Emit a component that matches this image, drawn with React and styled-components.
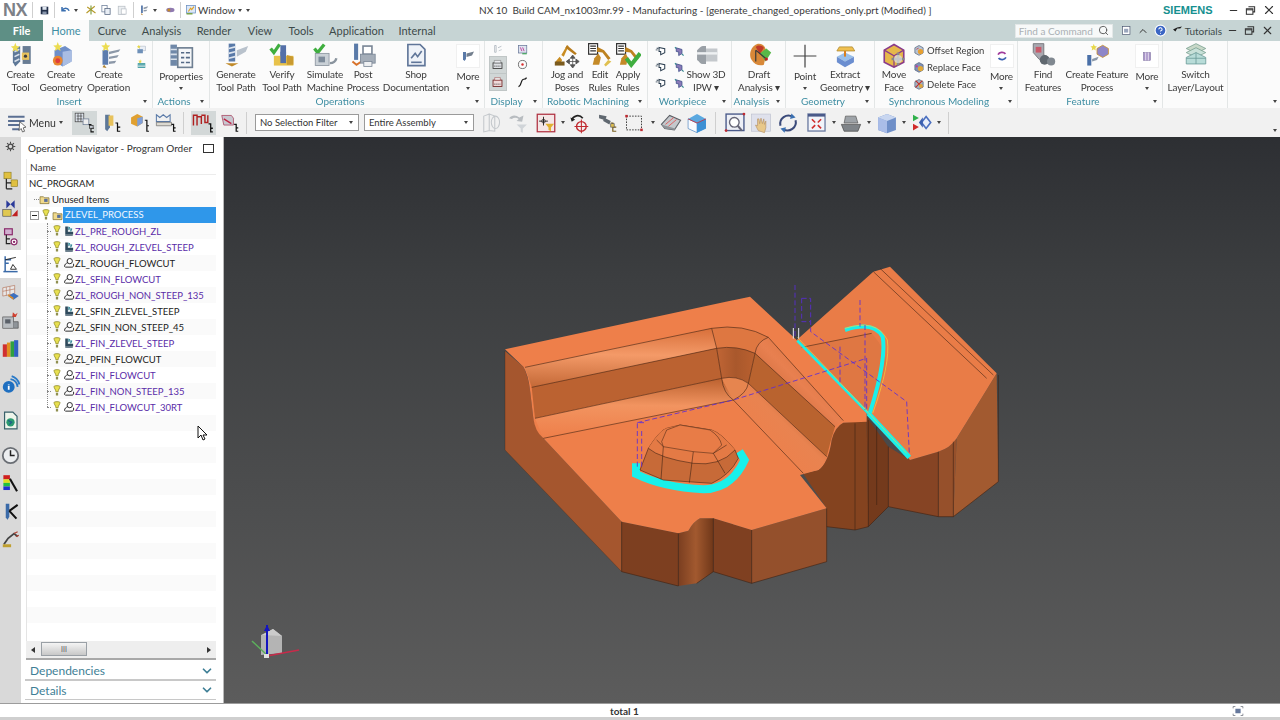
import React from "react";
import styled, { createGlobalStyle } from "styled-components";
import { ChevronDown, ChevronUp, Search, X, Minus, HelpCircle } from "lucide-react";

const GlobalStyle = createGlobalStyle`
  html, body { margin: 0; padding: 0; height: 100%; overflow: hidden; }
  body { font-family: Lato, "Liberation Sans", sans-serif; color: #333; background: #fff; }
  #root { height: 100%; }
`;

const TEAL = "#3f8ea3";
const PURPLE = "#5a2ca8";

const Svg = styled.svg`
  width: ${(p) => p.$s || 16}px;
  height: ${(p) => p.$s || 16}px;
  flex: none;
  display: block;
`;

const shapes = {
  save: <><rect x="5" y="5" width="22" height="22" fill="#23304a" /><rect x="10" y="5" width="12" height="9" fill="#dfe6f0" /><rect x="10" y="19" width="12" height="8" fill="#8795ab" /></>,
  undo: <path d="M8 8v10h10M8 18c5-9 15-9 19 0" fill="none" stroke="#3a6fb0" strokeWidth="4" />,
  scissors: <><path d="M4 24L26 6M6 8l22 16" stroke="#b79a2a" strokeWidth="3" /><path d="M16 4v24" stroke="#7a9a3a" strokeWidth="3" /></>,
  copy: <><rect x="5" y="4" width="14" height="17" fill="#fff" stroke="#6d7f9a" strokeWidth="2" /><rect x="13" y="12" width="14" height="16" fill="#e9eef5" stroke="#53647f" strokeWidth="2" /></>,
  paste: <><rect x="6" y="6" width="18" height="22" fill="#eceff2" stroke="#b8bec5" strokeWidth="2" /><rect x="14" y="13" width="13" height="14" fill="#fff" stroke="#b8bec5" strokeWidth="2" /></>,
  opMini: <><path d="M8 4h5v20H8z" fill="#5f7fae" /><path d="M10 24l3 6-5-2z" fill="#b07a2a" /><path d="M15 9l12-3-3 5-9 3zM15 16l10-1-3 4-7 1z" fill="#8f9aa8" /></>,
  eye: <><ellipse cx="17" cy="16" rx="11" ry="6" fill="#8f7ab0" /><circle cx="13" cy="16" r="4" fill="#c48a28" /></>,
  window: <><rect x="4" y="4" width="24" height="20" fill="#dce8f8" stroke="#6a8fc0" strokeWidth="2" /><path d="M9 20l6-9 3 4 6-8" stroke="#e2a020" strokeWidth="3" fill="none" /><rect x="4" y="24" width="16" height="4" fill="#7ba34a" /></>,
  createTool: <><path d="M6 10l9-5v19l-6 6-3-5z" fill="#5e7898" /><path d="M8 12l6-3M8 18l6-3M8 24l6-3" stroke="#d8e0ea" strokeWidth="2" /><rect x="18" y="5" width="10" height="22" fill="#687c94" /><rect x="17" y="13" width="9" height="9" fill="#e8c25c" /><circle cx="21.500" cy="17.500" r="2" fill="#3d3d3d" /><path d="M9 1l1.500 4 4 .4-3 2.600 1 4-3.500-2.200L5.500 12l1-4-3-2.600 4-.4z" fill="#ecdc50" /></>,
  createGeometry: <><path d="M8 10l13-5 8 5v14l-11 6-10-6z" fill="#6f8fc8" /><path d="M18 12l11-2v14l-11 6z" fill="#a9bde3" /><circle cx="12" cy="23" r="6" fill="#e8862e" /><circle cx="12" cy="23" r="3" fill="#e03c3c" /><path d="M12 0l1.500 4 4 .4-3 2.600 1 4L12 9 8.500 11l1-4-3-2.600 4-.4z" fill="#ecdc50" /></>,
  createOperation: <><rect x="8" y="10" width="7" height="18" fill="#5c7cae" /><path d="M10 28l3 4-5-1z" fill="#b0802c" /><path d="M16 12l14-3-2 3-12 3zM16 18l12-2-2 3-10 2zM16 24l9-1-2 3-7 1z" fill="#8c98a8" /><path d="M12 0l1.500 4 4 .4-3 2.600 1 4L12 9 8.500 11l1-4-3-2.600 4-.4z" fill="#ecdc50" /></>,
  smallA: <><rect x="10" y="6" width="18" height="14" fill="#eaeef4" stroke="#8593a8" /><rect x="4" y="15" width="16" height="12" fill="#6e90b8" /><path d="M8 2l1.500 4 4 .4-3 2.600 1 4L8 11l-3.500 2 1-4-3-2.600 4-.4z" fill="#e8d84a" /></>,
  smallB: <><rect x="5" y="12" width="22" height="14" fill="#3e9aa0" /><path d="M5 18h22M5 22h22" stroke="#e8f0f2" strokeWidth="2" /><path d="M12 1l1.500 4 4 .4-3 2.600 1 4L12 10l-3.500 2 1-4-3-2.600 4-.4z" fill="#e8d84a" /></>,
  properties: <><rect x="3" y="2" width="8" height="26" fill="#6f88a8" /><path d="M3 8h8M3 14h8M3 20h8" stroke="#d8e0ea" strokeWidth="2" /><rect x="12" y="6" width="18" height="24" fill="#f4f6f8" stroke="#6e7f92" strokeWidth="2" /><path d="M16 12h4M22 12h5M16 18h4M22 18h5M16 24h4M22 24h5" stroke="#546a86" strokeWidth="2" /></>,
  generate: <><rect x="7" y="2" width="8" height="22" fill="#5a7aa8" /><path d="M7 8l8-2M7 14l8-2M7 20l8-2" stroke="#dde4ee" strokeWidth="2" /><path d="M3 26h16l-8 4z" fill="#c08a2a" /><path d="M17 10l14-5-3 7-11 6z" fill="#b9c2cc" /></>,
  verify: <><path d="M2 8l4 5 7-10" stroke="#3fae3f" strokeWidth="4" fill="none" /><rect x="14" y="4" width="7" height="22" fill="#5470a8" /><rect x="6" y="17" width="24" height="12" fill="#e8c24a" /><rect x="14" y="12" width="7" height="14" fill="#5470a8" /><path d="M22 16l8 2v10h-8z" fill="#c99a30" /></>,
  simulate: <><path d="M3 8l4 5 8-10" stroke="#3fae3f" strokeWidth="4" fill="none" /><rect x="4" y="14" width="17" height="15" fill="#c9d0d6" stroke="#8a949e" /><rect x="8" y="18" width="8" height="7" fill="#7d8b9a" /><path d="M22 26c4 0 7-2 8-6" stroke="#8a949e" strokeWidth="3" fill="none" /></>,
  post: <><rect x="5" y="2" width="5" height="20" fill="#5a7aa8" /><path d="M3 24l5 4 6-4" stroke="#d8722a" strokeWidth="2.500" fill="none" /><rect x="16" y="5" width="11" height="10" fill="#fff" stroke="#7a8696" strokeWidth="2" /><rect x="13" y="15" width="18" height="11" fill="#a4adb8" stroke="#7a8696" /><rect x="17" y="24" width="10" height="6" fill="#eef0f2" stroke="#7a8696" /></>,
  shop: <><path d="M6 3h15l6 6v20H6z" fill="#eef2f8" stroke="#5f7598" strokeWidth="2" /><path d="M10 20l5-6 3 4 5-7" stroke="#5f7598" strokeWidth="2" fill="none" /><path d="M10 25h13" stroke="#5f7598" strokeWidth="2" /></>,
  moreOps: <><path d="M6 8h6v14l-3 4-3-3z" fill="#5a7aa8" /><path d="M13 11l15-4-4 8-11 3z" fill="#737f8e" /></>,
  dispA: <><path d="M7 4h4v18H7zM16 10l9-4" stroke="#a8b0ba" strokeWidth="2" fill="none" /><path d="M18 18l8-3" stroke="#b8c0c8" strokeWidth="2" /></>,
  dispB: <><rect x="4" y="4" width="22" height="20" fill="#dfe4f0" stroke="#6b7a9a" strokeWidth="2" /><path d="M9 9l4 10M15 9l4 10" stroke="#c0409a" strokeWidth="2.500" /><path d="M14 26h12" stroke="#38a050" strokeWidth="3" /></>,
  monitorA: <><rect x="5" y="12" width="22" height="14" fill="#dde0e4" stroke="#333" strokeWidth="2" /><path d="M8 6h16v6H8z" fill="#e8eaee" stroke="#555" /><path d="M8 20h16" stroke="#333" strokeWidth="2" strokeDasharray="3 2" /></>,
  monitorB: <><rect x="5" y="10" width="22" height="16" fill="#f0d8d8" stroke="#6a1818" strokeWidth="2" /><path d="M9 4h14v6H9z" fill="#eee" stroke="#8a2020" /><path d="M8 20h16" stroke="#333" strokeWidth="2" strokeDasharray="3 2" /></>,
  target: <><circle cx="16" cy="16" r="10" fill="none" stroke="#555" strokeWidth="2" /><circle cx="16" cy="16" r="3" fill="#d83030" /></>,
  spline: <path d="M6 26c8 0 5-18 13-18 3 0 6-2 7-4" fill="none" stroke="#1c1c1c" strokeWidth="3" />,
  jog: <><path d="M2 24l5-6 3 4-3 6zM9 16l7-12 2 1-6 13z" fill="#c98d22" /><path d="M16 4l12 10-2 2-12-9z" fill="#b77b1c" /><rect x="1" y="24" width="12" height="5" fill="#7b5b1e" /><path d="M23 18v12M17 24h12M23 16l-3 4h6zM23 32l-3-4h6zM15 24l4-3v6zM31 24l-4-3v6z" fill="#555" stroke="#555" /></>,
  edit: <><rect x="2" y="2" width="11" height="13" fill="#fff" stroke="#333" strokeWidth="1.500" /><path d="M4 5h7M4 8h7M4 11h7" stroke="#333" strokeWidth="1.500" /><path d="M13 6l8 4 8 10-3 2-7-9-7-1z" fill="#bd8220" /><path d="M9 20l5-6 3 5-2 9H7z" fill="#c48a28" /><path d="M26 22l-5 6 2 2 7-6z" fill="#e0c050" /></>,
  apply: <><rect x="2" y="2" width="11" height="13" fill="#fff" stroke="#333" strokeWidth="1.500" /><path d="M4 5h7M4 8h7M4 11h7" stroke="#333" strokeWidth="1.500" /><path d="M13 6l8 4 8 10-3 2-7-9-7-1z" fill="#bd8220" /><path d="M8 20l5-6 3 5-2 9H6z" fill="#c48a28" /><path d="M14 20l6 8 11-14" stroke="#3fae3f" strokeWidth="5" fill="none" /></>,
  wpA: <><path d="M4 8h4M10 6l14 3v10l-10 5v-8l-4 0z" fill="#fff" stroke="#2c3e50" strokeWidth="2.500" /><path d="M2 12h5" stroke="#2c3e50" strokeWidth="2.500" strokeDasharray="2 2" /></>,
  wpB: <><path d="M8 7l14 4v10l-8 5v-9l-6-1z" fill="#8a7ab8" stroke="#40508a" strokeWidth="2" /><path d="M5 5l3 4M22 22l4 4" stroke="#3a8a90" strokeWidth="3" /></>,
  ipw: <><path d="M5 10c3-2 4-5 7-5h4v22h-4c-3 0-4-3-7-5z" fill="#9aa0a6" /><rect x="16" y="8" width="14" height="16" fill="#c4c8cc" /><path d="M5 14h25" stroke="#eef0f2" strokeWidth="3" /></>,
  draft: <><path d="M7 22C2 14 8 2 16 2c7 0 9 7 9 12l-3 14c-6 2-12-1-15-6z" fill="#d88838" /><path d="M12 6c3-3 8-2 10 1l-5 8z" fill="#c03a2a" /><path d="M17 14l8-6 6 5-7 11z" fill="#58b848" /><path d="M12 10l12 10M12 10v14" stroke="#3a3a3a" strokeWidth="1.500" /><circle cx="25" cy="21" r="2" fill="#c02020" /></>,
  point: <path d="M16 2v28M2 16h28" stroke="#444" strokeWidth="1.500" />,
  extract: <><path d="M6 18l10-5 11 5-11 6z" fill="#9ac0e8" /><path d="M6 18v7l10 6 11-6v-7l-11 6z" fill="#6b8ed0" /><path d="M9 6h16l3 5H6z" fill="#f0c050" stroke="#b08a30" /><path d="M16 11v7" stroke="#d88020" strokeWidth="2.500" /></>,
  moveFace: <><path d="M4 10L16 3l12 7v15l-12 6-12-6z" fill="#e6b84a" stroke="#8a3c8a" strokeWidth="2" /><path d="M4 10l12 7 12-7M16 17v14" stroke="#8a3c8a" strokeWidth="1.500" fill="none" /><path d="M21 13v16M13 21h16" stroke="#888" strokeWidth="3" /><circle cx="21" cy="21" r="5" fill="#dfe2e6" opacity=".7" /></>,
  offset: <><path d="M5 10l11-6 11 6v14l-11 6-11-6z" fill="#b8c4d4" stroke="#5a6a80" strokeWidth="2" /><circle cx="20" cy="20" r="7" fill="#e8a030" /><path d="M9 14l6-3" stroke="#c03030" strokeWidth="2" /></>,
  replace: <><path d="M5 10l11-6 11 6v14l-11 6-11-6z" fill="#7f8fb8" stroke="#5a6a80" strokeWidth="2" /><circle cx="20" cy="20" r="7" fill="#e0a838" /><circle cx="10" cy="14" r="3" fill="#c03a9a" /></>,
  deleteFace: <><path d="M5 10l11-6 11 6v14l-11 6-11-6z" fill="#a7b4c4" stroke="#5a6a80" strokeWidth="2" /><path d="M7 7l18 18M25 7L7 25" stroke="#c0302a" strokeWidth="3" /><circle cx="21" cy="21" r="5" fill="#e0a838" /></>,
  sync: <><path d="M7 13c3-6 12-7 17-2" fill="none" stroke="#a03a9a" strokeWidth="4" /><path d="M25 19c-3 6-12 7-17 2" fill="none" stroke="#3a60b0" strokeWidth="4" /></>,
  find: <><path d="M4 2h13v14l6 3-4 6-8-4-7-8z" fill="#a8a8b0" stroke="#6a6a70" /><path d="M7 6h7v7H7z" fill="#c85a6a" /><circle cx="18" cy="22" r="6" fill="#606870" /><circle cx="26" cy="24" r="5" fill="#808890" /></>,
  featureProcess: <><path d="M4 16h5v13H4z" fill="#4a70a8" /><path d="M10 21l8-3-2 4-6 2z" fill="#8a98a8" /><path d="M16 8l7-4 7 4v7l-7 4-7-4z" fill="#8e86c8" stroke="#c8902c" /><path d="M12 2l1 3 3 .4-2 2 .5 3-2.500-1.500-2.500 1.500.5-3-2-2 3-.4z" fill="#e8d84a" /></>,
  moreFeat: <><rect x="8" y="8" width="16" height="18" fill="#a894c8" stroke="#6a5a90" /><path d="M13 8v18M19 8v18" stroke="#efe8f6" strokeWidth="2" /></>,
  layers: <><path d="M4 8l12-6 12 6-12 6z" fill="#c8d8c8" stroke="#7aa090" /><path d="M4 13l12-6 12 6-12 6z" fill="#c8e0d8" stroke="#7aa090" /><path d="M4 19l12-6 12 6v8H4z" fill="#b8dcd8" stroke="#6a9a98" /><path d="M16 13v14M4 20h24" stroke="#6a9a98" /></>,
  menu: <><path d="M3 7h24M3 13h24M3 19h16M9 25h10" stroke="#5b6f92" strokeWidth="3" /><path d="M20 14l9 8-4 1 2 5-3 1-2-5-3 3z" fill="#fff" stroke="#333" /></>,
  navA: <><rect x="3" y="3" width="12" height="12" fill="#dfe5ee" stroke="#444" /><path d="M5 7h8M5 11h8M7 3v12M11 3v12" stroke="#444" /><rect x="14" y="11" width="8" height="8" fill="#eee" stroke="#6a7a92" /><path d="M22 19h3v10h4M25 24h4" stroke="#111" strokeWidth="1.500" fill="none" /><rect x="23" y="20" width="5" height="4" fill="#c8cdd6" stroke="#333" /></>,
  navB: <><path d="M6 4h7v18l-4 6-3-3z" fill="#5e7898" /><rect x="11" y="5" width="7" height="15" fill="#e8c25c" /><path d="M21 16h3v12h4M24 22h4" stroke="#111" strokeWidth="1.800" fill="none" /></>,
  navC: <><path d="M3 8l9-5 8 4v9l-8 5-9-4z" fill="#e0a030" /><path d="M12 9l8-2v9l-8 5z" fill="#7f9fd8" /><path d="M23 12h3v16h3M26 20h3" stroke="#111" strokeWidth="1.800" fill="none" /></>,
  navD: <><path d="M2 4l5 4 5-4 5 4 5-4v10H2z" fill="none" stroke="#5a7aa8" strokeWidth="1.500" /><path d="M2 15h22v5H2z" fill="#dcd9d0" stroke="#6a6a6a" /><path d="M24 18h3v10h3M27 23h3" stroke="#111" strokeWidth="1.800" fill="none" /></>,
  navE: <><path d="M2 20V6h5v14M7 8h6v10M13 6h5v10h4V6" fill="none" stroke="#b02020" strokeWidth="2" /><path d="M23 18h3v11h3M26 24h3" stroke="#111" strokeWidth="1.800" fill="none" /></>,
  navF: <><path d="M4 5h14l3 4v10H7z" fill="#c8c8d0" stroke="#a03050" /><path d="M7 10l11 7" stroke="#c02040" strokeWidth="2" /><path d="M22 18h3v10h3M25 23h3" stroke="#111" strokeWidth="1.800" fill="none" /></>,
  filterA: <><path d="M4 6l8-3v24l-8 2zM12 3l8 3v22l-8-1z" fill="none" stroke="#c4c8cc" strokeWidth="1.500" /><ellipse cx="21" cy="15" rx="6" ry="9" fill="none" stroke="#c4c8cc" strokeWidth="1.500" /></>,
  filterB: <><path d="M3 9c4-5 10-5 15-1l6-3-2 9-8-1 3-3c-3-2-7-2-10 0z" fill="#b8bcc0" /><path d="M14 18h15l-6 6v6l-3-1v-5z" fill="#d0d4d8" /></>,
  selectFace: <><rect x="2" y="2" width="28" height="28" fill="#f4e6e6" stroke="#b03040" strokeWidth="2" /><path d="M12 6v14M5 13h14" stroke="#222" strokeWidth="1.500" /><circle cx="12" cy="13" r="3" fill="none" stroke="#222" /><path d="M15 17h14l-5 6v6l-4-2v-4z" fill="#e0b030" /></>,
  rotateTarget: <><path d="M4 12c2-7 11-9 16-3" fill="none" stroke="#222" strokeWidth="2.500" /><path d="M2 8l2 6 5-3z" fill="#222" /><circle cx="18" cy="21" r="7" fill="none" stroke="#c02a30" strokeWidth="2" /><path d="M18 11v20M8 21h20" stroke="#c02a30" strokeWidth="1.500" /></>,
  binoc: <><path d="M3 4l11 2-2 6-9-3zM10 8l10 5-2 5-9-5z" fill="#606870" /><path d="M20 16h3v12h5M23 22h5" stroke="#7a6020" strokeWidth="1.800" fill="none" /><rect x="20" y="17" width="5" height="5" fill="#e0c050" stroke="#555" /></>,
  marquee: <><rect x="4" y="5" width="24" height="22" fill="none" stroke="#333" strokeWidth="1.500" strokeDasharray="2.500 2" /><rect x="2" y="3" width="4" height="4" fill="#c02a30" /><rect x="26" y="25" width="4" height="4" fill="#c02a30" /></>,
  eraser: <><path d="M2 18L14 5l16 7-9 14-14-2z" fill="#c4c8cc" stroke="#5a5e64" strokeWidth="1.500" /><path d="M8 18l12-10M12 21l12-10" stroke="#e05050" strokeWidth="1.200" /><path d="M2 18l5 6 14 2 9-14-8 12z" fill="#8f9499" /></>,
  cubeBlue: <><path d="M3 10l13-7 13 7v14l-13 6-13-6z" fill="#5aa8e0" /><path d="M3 10l13 6v14L3 24z" fill="#f8fbff" stroke="#5a8ac0" /><path d="M16 16l13-6v14l-13 6z" fill="#3d90d4" /><path d="M16 16L3 10M16 16l13-6" stroke="#c03040" strokeWidth="1.200" /></>,
  zoomFit: <><rect x="3" y="3" width="26" height="24" fill="#eef0f6" stroke="#4a5a8a" strokeWidth="2" /><circle cx="15" cy="15" r="7" fill="#fff" stroke="#667" strokeWidth="2" /><path d="M20 20l6 7" stroke="#667" strokeWidth="3" /><circle cx="3" cy="27" r="2" fill="#c02a30" /><circle cx="29" cy="3" r="2" fill="#c02a30" /></>,
  hand: <><rect x="2" y="3" width="28" height="25" fill="#dfe1ec" stroke="#bfc2d0" /><path d="M12 27l-4-8 3 1V10l2 0 1 7 2-8 2 8 2-7 1 8 2-5v10l-2 7z" fill="#e8c88a" stroke="#b8956a" /></>,
  rotate: <><path d="M5 20a12 12 0 0 1 18-13" fill="none" stroke="#3a4a7a" strokeWidth="3" /><path d="M27 12a12 12 0 0 1-18 13" fill="none" stroke="#3a4a7a" strokeWidth="3" /><path d="M21 2l6 6-8 2zM11 30l-6-6 8-2z" fill="#3a6fb0" /></>,
  fit: <><rect x="3" y="3" width="26" height="26" fill="#f2f4fa" stroke="#6a7aa0" strokeWidth="2" /><path d="M3 3h26v4H3z" fill="#4a5a8a" /><path d="M9 11l5 5M23 11l-5 5M9 25l5-5M23 25l-5-5" stroke="#d03030" strokeWidth="2.500" /></>,
  shade: <><path d="M8 6h15l3 10H6z" fill="#9ea3a8" stroke="#555" /><path d="M2 18h28l-4 10H6z" fill="#7f8489" stroke="#444" /></>,
  cube: <><path d="M3 8l13-5 13 5v18l-13 5-13-5z" fill="#6f8fc8" /><path d="M3 8l13 5v18L3 26z" fill="#aabde8" /><path d="M3 8l13-5 13 5-13 5z" fill="#c8d6f0" /></>,
  show: <><path d="M3 14V4l9 5z" fill="#2fb04a" /><path d="M3 28V18l9 5z" fill="#d02a2a" /><path d="M16 16l7-9 7 9-7 9z" fill="#e8eefa" stroke="#4a6fc0" strokeWidth="2.500" /><path d="M12 16l6-8v16z" fill="#3a5fb0" /></>,
  restoreBox: <><rect x="4" y="4" width="22" height="24" fill="#fff" stroke="#4a5670" strokeWidth="2" /><rect x="9" y="11" width="12" height="11" fill="#9aa6bc" /></>,
  winRestore: <><path d="M10 5h18v15h-5" fill="none" stroke="#333" strokeWidth="3" /><rect x="4" y="11" width="19" height="16" fill="none" stroke="#333" strokeWidth="3" /><path d="M4 14h19" stroke="#333" strokeWidth="3" /></>,
  pointer: <><path d="M3 13l12-6 14-3-5 6H15l-5 9z" fill="#1c1c1c" /></>,
  statusFit: <><rect x="9" y="10" width="14" height="12" fill="#66789c" /><path d="M3 9V4h6M23 4h6v5M3 23v5h6M29 23v5h-6" stroke="#6a6f7a" strokeWidth="2" fill="none" /></>,
  gear: <><circle cx="16" cy="16" r="7" fill="none" stroke="#4a4a4a" strokeWidth="4" /><path d="M16 2v6M16 24v6M2 16h6M24 16h6M6 6l4 4M22 22l4 4M26 6l-4 4M10 22l-4 4" stroke="#4a4a4a" strokeWidth="3" /></>,
  railAssembly: <><rect x="5" y="2" width="12" height="11" fill="#e0c040" stroke="#8a7a20" /><rect x="17" y="15" width="11" height="11" fill="#e0c040" stroke="#8a7a20" /><path d="M9 13v17M9 20h8M9 30h10" stroke="#222" strokeWidth="2" fill="none" /></>,
  railConstraint: <><path d="M9 2l7 7 7-7v14l-7-7-7 7z" fill="#2a3a9a" /><rect x="3" y="18" width="14" height="11" fill="#e0c850" stroke="#444" /><path d="M18 29l10-11v11z" fill="#c02020" /></>,
  railHole: <><rect x="6" y="3" width="13" height="10" fill="#d0b0d0" stroke="#8a2a6a" strokeWidth="2" /><path d="M9 13v16M9 20h6M9 28h7" stroke="#222" strokeWidth="2" fill="none" /><circle cx="22" cy="25" r="5" fill="#fff" stroke="#8a2a6a" strokeWidth="2" /><circle cx="22" cy="25" r="2" fill="#8a2a6a" /></>,
  railOps: <><path d="M7 2v26M7 8h10M7 14h6" stroke="#3a6aa8" strokeWidth="2.500" /><path d="M7 8l18-4M16 24l10 0-6-8z" stroke="#222" strokeWidth="1.500" fill="none" /><path d="M4 28h24" stroke="#3a6aa8" strokeWidth="2.500" /></>,
  railTable: <><path d="M3 8l20-4v14L3 22z" fill="#e8e8e8" stroke="#b06a50" /><path d="M9 7v14M15 6v14M3 14l20-4" stroke="#b06a50" /><path d="M12 22l9-5 9 5-9 6z" fill="#3a70c0" /><path d="M12 22l9 6v-3l-9-6z" fill="#e08a20" /></>,
  railMachine: <><path d="M20 2l4 4 4-3-3 7h-6z" fill="#d04030" /><rect x="3" y="10" width="18" height="19" fill="#b8bcc0" stroke="#444" /><rect x="7" y="14" width="9" height="7" fill="#5a6068" /><path d="M21 18h8v11h-8" fill="#8f9499" stroke="#444" /></>,
  railBooks: <><rect x="3" y="9" width="7" height="21" fill="#d03030" /><rect x="10" y="6" width="6" height="24" fill="#e09020" /><rect x="16" y="4" width="6" height="26" fill="#30a040" /><rect x="22" y="2" width="7" height="28" fill="#3060c0" /></>,
  railInfo: <><circle cx="13" cy="20" r="10" fill="#1f6fc0" /><path d="M13 15v1M13 18v7" stroke="#fff" strokeWidth="3" /><path d="M16 7a15 15 0 0 1 12 13M18 2a20 20 0 0 1 13 14" fill="none" stroke="#2a7ac8" strokeWidth="3" /></>,
  railDoc: <><path d="M6 2h14l7 7v21H6z" fill="#eef4ea" stroke="#38606a" strokeWidth="2" /><circle cx="16" cy="19" r="7" fill="#2a9a70" /><path d="M12 16l6 3-4 4" stroke="#205a8a" strokeWidth="2" fill="none" /></>,
  railClock: <><circle cx="16" cy="16" r="13" fill="#eceef0" stroke="#6a6e74" strokeWidth="3" /><path d="M16 7v9h7" stroke="#222" strokeWidth="2.500" fill="none" /></>,
  railColors: <><rect x="4" y="2" width="11" height="7" fill="#d02020" /><rect x="4" y="9" width="11" height="6" fill="#e0e020" /><rect x="4" y="15" width="11" height="6" fill="#20c040" /><rect x="4" y="21" width="11" height="6" fill="#2030d0" /><path d="M15 8l12 21" stroke="#111" strokeWidth="3.500" /></>,
  railTool: <><path d="M8 3h6v22l-3 5-3-4z" fill="#3a6aa8" /><path d="M14 15L28 5M14 15l12 13" stroke="#111" strokeWidth="3.500" /></>,
  railRobot: <><path d="M5 24l7-10 10-8 6 5" fill="none" stroke="#444" strokeWidth="3" /><path d="M22 6l6-3M25 11l5-2" stroke="#b04030" strokeWidth="2" /><rect x="3" y="24" width="14" height="5" fill="#c0a030" /></>,
  bulb: <><path d="M8 4c0-3 16-3 16 0 0 5-5 8-5 14h-6c0-6-5-9-5-14z" fill="#e8e050" stroke="#8a8420" strokeWidth="2" /><rect x="13" y="21" width="6" height="7" fill="#8f8f50" /></>,
  folder: <><path d="M3 8h10l3 3h13v17H3z" fill="#f0d98c" stroke="#7a6a2c" strokeWidth="2" /><rect x="15" y="14" width="10" height="9" fill="#5a6f9a" /></>,
  opZ: <><path d="M6 4h7v14h14v7H6z" fill="#2f4a5c" /><path d="M14 4l5 2-2 8h-3zM20 8l5 2-3 7h-3z" fill="#3a8a9a" /><path d="M6 27h20" stroke="#2f4a5c" strokeWidth="3" /></>,
  opF: <><circle cx="18" cy="11" r="7" fill="#fff" stroke="#222" strokeWidth="2.500" /><path d="M4 26c0-7 5-10 8-10M28 18c1 5 0 8-3 9H6" fill="none" stroke="#222" strokeWidth="2.500" /></>,
};

const Icon = ({ name, size = 16 }) => (
  <Svg viewBox="0 0 32 32" $s={size}>{shapes[name]}</Svg>
);

const Page = styled.div`
  width: 1280px;
  height: 720px;
  display: flex;
  flex-direction: column;
  overflow: hidden;
  filter: blur(0.3px);
`;

/* title bar */
const TitleBar = styled.div`
  height: 20px;
  display: flex;
  align-items: center;
  background: #fff;
  font-size: 10px;
  color: #3a3a3a;
`;
const QuickAccess = styled.div`
  width: 479px;
  display: flex;
  align-items: center;
  padding-left: 3px;
  box-sizing: border-box;
`;
const Logo = styled.span`
  font: bold 18px "Liberation Sans", sans-serif;
  color: #7d8188;
  width: 27px;
  letter-spacing: -0.5px;
`;
const QuickIcon = styled.span`
  width: ${(p) => p.$w || 15}px;
  display: flex;
  justify-content: center;
`;
const Caret = styled.span`
  width: 0;
  height: 0;
  flex: none;
  border-left: 2.5px solid transparent;
  border-right: 2.5px solid transparent;
  border-top: 3px solid #444;
  margin: ${(p) => p.$m || "0 3px"};
`;
const VSep = styled.span`
  width: 1px;
  height: ${(p) => p.$h || 16}px;
  background: #cfcfcf;
  flex: none;
  margin: ${(p) => p.$m || "0 4px"};
`;
const TitleText = styled.div`
  flex: 1;
  white-space: pre;
`;
const Brand = styled.div`
  font: bold 11px "Liberation Sans", sans-serif;
  color: #16908f;
  width: 65px;
`;
const WinControls = styled.div`
  display: flex;
  align-items: center;
  gap: ${(p) => p.$gap || 5}px;
  padding-right: ${(p) => p.$pad || 4}px;
  color: #333;
`;

/* tabs */
const TabBar = styled.div`
  height: 21px;
  background: #c6d4d4;
  display: flex;
  align-items: stretch;
  font-size: 11px;
`;
const Tab = styled.div`
  width: ${(p) => p.$w}px;
  display: flex;
  align-items: center;
  justify-content: center;
  color: ${(p) => (p.$active ? TEAL : p.$file ? "#fff" : "#3d4a4a")};
  background: ${(p) => (p.$active ? "#fbfbfb" : p.$file ? "#5e8f85" : "transparent")};
  font-weight: ${(p) => (p.$file ? 700 : 400)};
`;
const TabTools = styled.div`
  margin-left: auto;
  display: flex;
  align-items: center;
  color: #333;
`;
const CommandSearch = styled.div`
  width: 98px;
  height: 14px;
  box-sizing: border-box;
  background: #f7f9f9;
  border: 1px solid #e4e8e8;
  display: flex;
  align-items: center;
  justify-content: space-between;
  padding: 0 3px;
  color: #aab0b4;
  font-size: 10px;
  white-space: nowrap;
  margin-right: 5px;
`;
const TutorialsLink = styled.span`
  display: flex;
  align-items: center;
  gap: 2px;
  font-size: 10px;
  color: #3d4a4a;
  margin: 0 5px 0 3px;
`;

/* ribbon */
const Ribbon = styled.div`
  height: 67px;
  background: #fbfbfb;
  display: flex;
  position: relative;
`;
const Group = styled.div`
  width: ${(p) => p.$w}px;
  flex: none;
  box-sizing: border-box;
  border-right: 1px solid #e3e6e6;
  display: flex;
  flex-direction: column;
`;
const GroupBody = styled.div`
  flex: 1;
  display: flex;
  min-height: 0;
`;
const GroupCaption = styled.div`
  height: 14px;
  flex: none;
  display: flex;
  align-items: center;
  justify-content: center;
  position: relative;
  padding-right: 14px;
  color: ${TEAL};
  font-size: 10px;
`;
const CaptionArrow = styled(Caret)`
  position: absolute;
  right: 5px;
  top: 6px;
  margin: 0;
`;
const RibbonButton = styled.div`
  width: ${(p) => p.$w}px;
  flex: none;
  display: flex;
  flex-direction: column;
  align-items: center;
  padding-top: 1px;
  box-sizing: border-box;
  color: #3c3c3c;
`;
const IconSlot = styled.div`
  height: 28px;
  width: 100%;
  display: flex;
  align-items: center;
  justify-content: center;
`;
const MoreFrame = styled.div`
  width: 24px;
  height: 24px;
  display: flex;
  align-items: center;
  justify-content: center;
  background: #fff;
  border: 1px solid #f0f0f0;
  box-sizing: border-box;
`;
const ButtonLabel = styled.div`
  font-size: 10px;
  letter-spacing: -0.15px;
  line-height: 13px;
  text-align: center;
  white-space: pre;
  display: flex;
  flex-direction: column;
  align-items: center;
`;
const ArrowLine = styled.div`
  height: 11px;
  display: flex;
  align-items: center;
`;
const SmallColumn = styled.div`
  width: ${(p) => p.$w}px;
  flex: none;
  display: flex;
  flex-direction: column;
  gap: ${(p) => p.$gap || 3}px;
  padding-top: ${(p) => p.$top || 3}px;
  align-items: ${(p) => p.$align || "center"};
`;
const SmallAction = styled.div`
  display: flex;
  align-items: center;
  gap: 2px;
  height: 14px;
  font-size: 9.5px;
  color: #3c3c3c;
  white-space: nowrap;
`;
const IconGrid = styled.div`
  width: ${(p) => p.$w}px;
  flex: none;
  box-sizing: border-box;
  padding: 2px 0 0 ${(p) => p.$left || 0}px;
  display: grid;
  grid-template-columns: repeat(2, 1fr);
  justify-items: center;
  align-items: center;
  height: 50px;
`;
const PressedCell = styled.div`
  width: 16px;
  height: 16px;
  display: flex;
  align-items: center;
  justify-content: center;
  background: ${(p) => (p.$on ? "#d0d6d6" : "transparent")};
  outline: ${(p) => (p.$on ? "1px solid #c0c6c6" : "none")};
`;
const OverflowArrow = styled(Caret)`
  position: absolute;
  right: 3px;
  bottom: 5px;
  margin: 0;
`;

/* selection bar */
const SelectionBar = styled.div`
  height: 29px;
  background: #f1f1f1;
  display: flex;
  align-items: center;
  position: relative;
`;
const MenuButton = styled.div`
  width: 66px;
  padding-left: 6px;
  box-sizing: border-box;
  display: flex;
  align-items: center;
  gap: 1px;
  font-size: 10.5px;
  color: #333;
  margin-right: 6px;
`;
const ToolButton = styled.div`
  width: ${(p) => p.$w || 26}px;
  height: 24px;
  flex: none;
  display: flex;
  align-items: center;
  justify-content: center;
  background: ${(p) => (p.$on ? "#d3d8d8" : "transparent")};
`;
const Gap = styled.span`
  width: ${(p) => p.$w}px;
  flex: none;
  display: flex;
  align-items: center;
  justify-content: center;
`;
const SelectBox = styled.div`
  width: ${(p) => p.$w}px;
  height: 17px;
  flex: none;
  box-sizing: border-box;
  background: #fff;
  border: 1px solid #9a9a9a;
  display: flex;
  align-items: center;
  justify-content: space-between;
  padding: 0 3px 0 4px;
  font-size: 9.5px;
  color: #333;
  margin-right: 5px;
`;

/* main */
const Main = styled.div`
  flex: 1;
  display: flex;
  min-height: 0;
`;
const Rail = styled.div`
  width: 21px;
  flex: none;
  background: #d9d9d9;
  display: flex;
  flex-direction: column;
  align-items: center;
`;
const RailItem = styled.div`
  width: 21px;
  height: ${(p) => p.$h || 28}px;
  margin-top: ${(p) => p.$mt || 0}px;
  display: flex;
  align-items: center;
  justify-content: center;
  flex: none;
  background: ${(p) => (p.$on ? "#fff" : "transparent")};
`;
const Panel = styled.div`
  width: 202px;
  flex: none;
  background: #fff;
  border-right: 1px solid #b9b9b9;
  display: flex;
  flex-direction: column;
  padding-bottom: 3px;
`;
const PanelHeader = styled.div`
  height: 22px;
  display: flex;
  align-items: center;
  justify-content: space-between;
  padding: 0 9px 0 7px;
  font-size: 10px;
  color: #333;
`;
const PinBox = styled.span`
  width: 9px;
  height: 7px;
  border: 1px solid #333;
`;
const Tree = styled.div`
  flex: 1;
  margin: 0 7px 0 5px;
  border-left: 1px solid #e4e4e4;
  min-height: 0;
  overflow: hidden;
  position: relative;
`;
const ColumnHead = styled.div`
  height: 16px;
  display: flex;
  align-items: center;
  padding-left: 3px;
  font-size: 10px;
  color: #333;
  border-bottom: 1px solid #ececec;
  box-sizing: border-box;
`;
const Row = styled.div`
  height: 16px;
  display: flex;
  align-items: center;
  background: ${(p) => (p.$odd ? "#fafafa" : "#fff")};
  padding-left: ${(p) => p.$indent || 0}px;
  font-size: 9.5px;
  color: ${(p) => p.$color || "#222"};
  white-space: nowrap;
  position: relative;
`;
const Selected = styled.span`
  flex: 1;
  height: 16px;
  line-height: 16px;
  background: #2f97ea;
  color: #f2f8ff;
  padding-left: 2px;
`;
const Dash = styled.span`
  width: ${(p) => p.$w}px;
  flex: none;
  border-top: 1px dotted #888;
`;
const Expander = styled.span`
  width: 7px;
  height: 7px;
  border: 1px solid #999;
  background: #fff;
  flex: none;
  position: relative;
  margin-right: 1px;
  &::after {
    content: "";
    position: absolute;
    left: 1px;
    right: 1px;
    top: 3px;
    height: 1px;
    background: #222;
  }
`;
const RowLabel = styled.span`
  margin-left: ${(p) => p.$ml || 0}px;
`;
const TreeLine = styled.span`
  position: absolute;
  left: 20px;
  top: 64px;
  height: 184px;
  border-left: 1px dotted #888;
`;
const CursorMark = styled.svg`
  position: absolute;
  left: 170px;
  top: 266px;
  width: 12px;
  height: 16px;
`;
const ScrollBar = styled.div`
  height: 17px;
  flex: none;
  margin: 0 7px 2px 5px;
  background: #eeeeee;
  display: flex;
  align-items: center;
  justify-content: space-between;
  padding: 0 5px;
  position: relative;
  border-bottom: 2px solid #a8a8a8;
`;
const ArrowLeft = styled.span`
  border-top: 3px solid transparent;
  border-bottom: 3px solid transparent;
  border-right: 4px solid #333;
`;
const ArrowRight = styled.span`
  border-top: 3px solid transparent;
  border-bottom: 3px solid transparent;
  border-left: 4px solid #333;
`;
const Thumb = styled.span`
  position: absolute;
  left: 15px;
  top: 1px;
  width: 44px;
  height: 12px;
  background: linear-gradient(#f4f4f4, #c8c8c8);
  border: 1px solid #9aa0a6;
  display: flex;
  align-items: center;
  justify-content: center;
  font-size: 7px;
  color: #555;
`;
const Accordion = styled.div`
  height: ${(p) => p.$h}px;
  box-sizing: border-box;
  flex: none;
  margin: 0 7px 0 4px;
  padding: 0 2px 0 5px;
  display: flex;
  align-items: center;
  justify-content: space-between;
  color: #3f7f96;
  font-size: 12px;
  border-bottom: ${(p) => (p.$thick ? 2 : 1)}px solid #c8c8c8;
`;
const Viewport = styled.div`
  flex: 1;
  position: relative;
  overflow: hidden;
  background: linear-gradient(#2d2f33 0%, #3c3e40 25%, #5c5c5c 100%);
`;
const ModelDrawing = styled.svg`
  position: absolute;
  left: 266px;
  top: 113px;
  width: 520px;
  height: 350px;
`;
const TriadDrawing = styled.svg`
  position: absolute;
  left: 25px;
  top: 486px;
  width: 60px;
  height: 44px;
`;
const StatusBar = styled.div`
  height: 17px;
  box-sizing: border-box;
  background: #fff;
  border-top: 1px solid #9c9c9c;
  border-bottom: 3px solid #cfcfcf;
  display: flex;
  align-items: center;
  font-size: 10px;
  font-weight: 700;
  color: #333;
`;
const StatusText = styled.span`
  width: 1232px;
  box-sizing: border-box;
  padding-left: 610px;
`;

const Model = () => (
  <ModelDrawing viewBox="0 0 1560 1050">
    <defs>
      <linearGradient id="fillet" x1="0.52" y1="0" x2="0.48" y2="1">
        <stop offset="0" stopColor="#d9713c" />
        <stop offset="0.45" stopColor="#f49a68" />
        <stop offset="1" stopColor="#c56a38" />
      </linearGradient>
      <linearGradient id="filletLow" x1="0.52" y1="0" x2="0.48" y2="1">
        <stop offset="0" stopColor="#bd6331" />
        <stop offset="0.45" stopColor="#f29460" />
        <stop offset="1" stopColor="#ee7f4a" />
      </linearGradient>
      <linearGradient id="side" x1="0" y1="1" x2="1" y2="0">
        <stop offset="0.2" stopColor="#c96737" />
        <stop offset="0.5" stopColor="#e88050" />
        <stop offset="0.8" stopColor="#d9713c" />
      </linearGradient>
      <linearGradient id="sideLow" x1="0" y1="1" x2="1" y2="0">
        <stop offset="0.2" stopColor="#ee7f4a" />
        <stop offset="0.55" stopColor="#e98350" />
        <stop offset="0.8" stopColor="#bd6331" />
      </linearGradient>
      <linearGradient id="notch" x1="0" y1="0" x2="1" y2="0">
        <stop offset="0" stopColor="#7a3e20" />
        <stop offset="0.5" stopColor="#a2592f" />
        <stop offset="1" stopColor="#6f3719" />
      </linearGradient>
      <linearGradient id="wallCorner" x1="0" y1="0" x2="1" y2="0">
        <stop offset="0" stopColor="#c06535" />
        <stop offset="0.5" stopColor="#a9582c" />
        <stop offset="1" stopColor="#b9602f" />
      </linearGradient>
    </defs>
    {/* outer walls */}
    <path d="M45,303 L100,350 Q115,380 120,420 L130,505 Q140,545 160,565 L395,815 L395,965 L45,600 Z" fill="#a5562e" />
    <path d="M395,815 L565,850 L565,1008 L395,965 Z" fill="#7d3f20" />
    <path d="M565,850 L595,842 Q610,815 630,805 L670,805 L670,965 L620,1000 L565,1008 Z" fill="url(#notch)" />
    <path d="M670,805 L785,840 L785,1000 L670,965 Z" fill="#7f4021" />
    <path d="M785,840 L1010,775 L1010,935 L785,1000 Z" fill="#94502c" />
    <path d="M940,672 L985,660 Q1015,640 1025,570 Q1035,530 1060,518 L1130,512 L1135,830 L1095,840 L1010,830 L1010,775 Z" fill="#84431f" />
    <path d="M1130,500 L1195,590 L1195,770 L1135,830 Z" fill="#743a1c" />
    <path d="M1195,590 L1260,630 L1345,605 L1345,800 L1195,770 Z" fill="#864424" />
    <path d="M1345,605 Q1380,595 1400,565 L1390,800 L1345,800 Z" fill="#96502b" />
    <path d="M1400,565 L1520,370 L1525,695 L1390,800 Z" fill="#a25a30" />
    {/* right wedge */}
    <path d="M920,270 L1150,65 L1200,50 L1520,370 L1400,565 Q1380,595 1345,605 L1260,630 L1130,490 Z" fill="#e97c47" />
    <path d="M935,292 L1145,250 Q1190,300 1190,350 Q1170,430 1135,485 Z" fill="#df7743" />
    {/* top plate */}
    <path d="M45,298 L780,140 L920,270 L1130,490 L1130,515 L1060,518 Q1035,530 1025,570 Q1015,640 985,660 L930,675 L1010,775 L785,840 L670,805 L630,805 Q610,815 595,842 L565,850 L395,815 L160,565 Q135,545 130,505 L120,420 Q115,375 100,350 Z" fill="#ee7f4a" />
    {/* pocket */}
    <path d="M105,352 L665,235 L680,295 L125,412 Z" fill="url(#fillet)" />
    <path d="M665,235 Q760,220 835,262 Q800,275 795,310 Q740,285 680,295 Z" fill="#de7741" />
    <path d="M835,262 L1060,512 Q1045,520 1035,530 L795,310 Q800,275 835,262 Z" fill="url(#side)" />
    <path d="M125,412 L680,295 L695,385 L135,505 Z" fill="#bb6231" />
    <path d="M680,295 Q740,285 795,310 Q785,350 775,400 Q740,375 695,385 Z" fill="url(#wallCorner)" />
    <path d="M795,310 L1035,530 Q1022,570 1010,620 L775,400 Z" fill="#b9632f" />
    <path d="M135,505 L695,385 L730,450 L160,565 Z" fill="url(#filletLow)" />
    <path d="M695,385 Q740,375 775,400 Q770,430 730,450 Z" fill="#e6854f" />
    <path d="M775,400 L1010,620 Q1000,650 985,660 L940,670 L730,450 Q770,430 775,400 Z" fill="url(#sideLow)" />
    {/* edges */}
    <g fill="none" stroke="#3a2012" strokeWidth="1.700">
      <path d="M105,352 L665,235 Q760,220 835,262 L1060,512" />
      <path d="M125,412 L680,295 Q740,285 795,310 L1035,530" />
      <path d="M135,505 L695,385 Q740,375 775,400 L1010,620" />
      <path d="M160,565 L730,450 L940,670" />
      <path d="M665,235 L680,295 L695,385 Q700,430 730,450 Q770,430 775,400 L795,310 Q800,275 835,262" />
      <path d="M395,815 V965 L565,1008 V850 M620,1000 L670,965 V805 M670,965 L785,1000 V840 M785,1000 L1010,935 V775" />
      <path d="M1010,830 L1095,840 L1135,830 V510 M1095,520 V840 M1160,530 V765 M1135,830 L1195,770 V590 M1195,770 L1345,800 H1390 L1525,695 V375 M1345,605 V800 M1390,575 V800" />
      <path d="M1150,65 L1490,385 M1170,55 L1510,375 M935,292 L1145,250" />
      <path d="M45,303 V600 L395,965" strokeOpacity="0.5" />
    </g>
    {/* boss */}
    <path d="M438,640 L438,672 Q520,712 640,718 Q725,716 764,630 L748,604" fill="none" stroke="#19f0ea" strokeWidth="24" />
    <path d="M450,660 L475,595 Q510,540 530,535 L570,525 L665,540 Q695,550 735,600 L745,625 Q720,675 665,700 L520,690 Z" fill="#c76a38" stroke="#3a2012" strokeWidth="1.700" />
    <path d="M475,595 Q510,625 610,640 Q690,650 735,600 Q695,550 665,540 L570,525 L530,535 Q510,540 475,595 Z" fill="#e47a45" />
    <path d="M515,575 L530,540 L570,525 L660,540 Q690,560 695,585 L670,610 L610,605 L520,590 Z" fill="#e87c47" stroke="#3a2012" strokeWidth="1.500" />
    <g fill="none" stroke="#3a2012" strokeWidth="1.700">
      <path d="M475,595 Q510,625 610,640 Q690,650 735,600" />
      <path d="M520,590 L513,688 M610,605 L598,698 M670,610 L705,670 M500,570 L520,590 M710,585 L670,610" />
    </g>
    {/* tool paths */}
    <path d="M922,272 L1135,490" fill="none" stroke="#19f0ea" strokeWidth="8" />
    <path d="M1135,490 L1258,622" fill="none" stroke="#19f0ea" strokeWidth="15" />
    <path d="M922,262 L1250,610" fill="none" stroke="#f2d840" strokeWidth="1.800" />
    <path d="M1065,240 Q1150,212 1178,260 Q1190,330 1140,488" fill="none" stroke="#19f0ea" strokeWidth="12" />
    <path d="M1065,235 Q1160,205 1192,270 Q1202,340 1148,490" fill="none" stroke="#f2d840" strokeWidth="2" />
    <g fill="none" stroke="#5a2bd8" strokeWidth="2.500" strokeDasharray="15 8">
      <path d="M442,650 V518 H462 M455,650 V535 M442,518 L730,450 L1130,325 V480" />
      <path d="M915,105 V265 M935,145 V215 H960 M935,145 H962 V245 L1250,455 L1258,610 M1050,290 V400 M1110,150 V230 M1125,225 V480" />
    </g>
    <path d="M910,234 V266 M926,234 V266" stroke="#e8e8f0" strokeWidth="3" />
  </ModelDrawing>
);

const Triad = () => (
  <TriadDrawing viewBox="0 0 60 44">
    <path d="M12 12l12-6 9 7v17l-21 2z" fill="#b4b4b4" />
    <path d="M24 6l9 7-20-1z" fill="#cbcbcb" />
    <path d="M18 32L3 18" stroke="#5cb05c" strokeWidth="1.500" />
    <path d="M18 33L50 27" stroke="#c82a4a" strokeWidth="1.500" />
    <path d="M18 32V2" stroke="#1414c0" strokeWidth="2" />
    <path d="M15 8l3-6 3 6z" fill="#1414c0" />
    <rect x="15" y="31" width="5" height="4" fill="#e0e0e0" />
  </TriadDrawing>
);

const framed = { moreOps: 16, sync: 14, moreFeat: 14 };

const renderItem = (it, i) => {
  if (it[0] === "g") return <Gap key={i} $w={it[1]} />;
  if (it[0] === "s") {
    return (
      <SmallColumn key={i} $w={it[2]} $gap={4} $top={3}>
        {it[1].map((n) => <Icon key={n} name={n} size={11} />)}
      </SmallColumn>
    );
  }
  const [, icon, label, w, arrow, caretLine] = it;
  const lines = label.split("\n");
  return (
    <RibbonButton key={i} $w={w}>
      <IconSlot>
        {framed[icon] ? <MoreFrame><Icon name={icon} size={framed[icon]} /></MoreFrame> : <Icon name={icon} size={26} />}
      </IconSlot>
      <ButtonLabel>
        {lines.map((l, k) => (
          <span key={k}>{l}{caretLine && k === lines.length - 1 ? " ▾" : ""}</span>
        ))}
        {arrow && <ArrowLine><Caret /></ArrowLine>}
      </ButtonLabel>
    </RibbonButton>
  );
};

const RibbonGroup = ({ g }) => (
  <Group $w={g.w}>
    <GroupBody>{g.items.map(renderItem)}</GroupBody>
    <GroupCaption>{g.title}<CaptionArrow /></GroupCaption>
  </Group>
);

const rows = [
  ["ZL_PRE_ROUGH_ZL", "opZ", PURPLE],
  ["ZL_ROUGH_ZLEVEL_STEEP", "opZ", PURPLE],
  ["ZL_ROUGH_FLOWCUT", "opF", "#1c1c1c"],
  ["ZL_SFIN_FLOWCUT", "opF", PURPLE],
  ["ZL_ROUGH_NON_STEEP_135", "opF", PURPLE],
  ["ZL_SFIN_ZLEVEL_STEEP", "opZ", "#1c1c1c"],
  ["ZL_SFIN_NON_STEEP_45", "opF", "#1c1c1c"],
  ["ZL_FIN_ZLEVEL_STEEP", "opZ", PURPLE],
  ["ZL_PFIN_FLOWCUT", "opF", "#1c1c1c"],
  ["ZL_FIN_FLOWCUT", "opF", PURPLE],
  ["ZL_FIN_NON_STEEP_135", "opF", PURPLE],
  ["ZL_FIN_FLOWCUT_30RT", "opF", PURPLE],
];

const railIcons = [
  ["railAssembly"], ["railConstraint"], ["railHole"], ["railOps", 0, true], ["railTable"], ["railMachine"], ["railBooks"],
  ["railInfo", 8], ["railDoc", 8], ["railClock", 7], ["railColors"], ["railTool"], ["railRobot"],
];

const emptyRows = Array.from({ length: 14 }, (_, i) => i);

const Caption = ({ children }) => (
  <GroupCaption>{children}<CaptionArrow /></GroupCaption>
);

export default function App() {
  return (
    <Page>
      <GlobalStyle />
      <TitleBar>
        <QuickAccess>
          <Logo>NX</Logo>
          <VSep $m="0 5px 0 2px" />
          <QuickIcon $w={13}><Icon name="save" size={11} /></QuickIcon>
          <VSep $m="0 3px" />
          <QuickIcon $w={13}><Icon name="undo" size={12} /></QuickIcon>
          <Caret $m="0 5px 0 3px" />
          <QuickIcon $w={15}><Icon name="scissors" size={12} /></QuickIcon>
          <QuickIcon $w={15}><Icon name="copy" size={12} /></QuickIcon>
          <QuickIcon $w={17}><Icon name="paste" size={12} /></QuickIcon>
          <VSep $m="0 4px 0 3px" />
          <QuickIcon $w={12}><Icon name="opMini" size={12} /></QuickIcon>
          <Caret $m="0 6px 0 3px" />
          <QuickIcon $w={14}><Icon name="eye" size={12} /></QuickIcon>
          <VSep $m="0 4px 0 3px" />
          <QuickIcon $w={12}><Icon name="window" size={12} /></QuickIcon>
          <RowLabel $ml={1}>Window</RowLabel>
          <Caret $m="0 2px 0 3px" />
          <Caret $m="0 0 0 2px" />
        </QuickAccess>
        <TitleText>NX 10  Build CAM_nx1003mr.99 - Manufacturing - [generate_changed_operations_only.prt (Modified) ]</TitleText>
        <Brand>SIEMENS</Brand>
        <WinControls $gap={6} $pad={4}>
          <Minus size={11} strokeWidth={2.5} />
          <Icon name="winRestore" size={11} />
          <X size={14} strokeWidth={2} />
        </WinControls>
      </TitleBar>

      <TabBar>
        <Tab $w={43} $file>File</Tab>
        <Tab $w={46} $active>Home</Tab>
        <Tab $w={46}>Curve</Tab>
        <Tab $w={53}>Analysis</Tab>
        <Tab $w={52}>Render</Tab>
        <Tab $w={40}>View</Tab>
        <Tab $w={42}>Tools</Tab>
        <Tab $w={69}>Application</Tab>
        <Tab $w={52}>Internal</Tab>
        <TabTools>
          <CommandSearch>Find a Command<Search size={11} color="#555" /></CommandSearch>
          <QuickIcon $w={17}><Icon name="restoreBox" size={11} /></QuickIcon>
          <QuickIcon $w={17}><ChevronUp size={12} /></QuickIcon>
          <QuickIcon $w={17}><HelpCircle size={13} fill="#3b66c4" color="#fff" /></QuickIcon>
          <TutorialsLink><Icon name="pointer" size={11} />Tutorials</TutorialsLink>
          <WinControls $gap={6} $pad={6}>
            <Minus size={11} strokeWidth={2.5} />
            <Icon name="winRestore" size={11} />
            <X size={13} strokeWidth={2} />
          </WinControls>
        </TabTools>
      </TabBar>

      <Ribbon>
        <RibbonGroup g={{ title: "Insert", w: 153, items: [
          ["b", "createTool", "Create\nTool", 41],
          ["b", "createGeometry", "Create\nGeometry", 40],
          ["b", "createOperation", "Create\nOperation", 55],
          ["s", ["smallA", "smallB"], 11],
        ] }} />
        <RibbonGroup g={{ title: "Actions", w: 57, items: [["b", "properties", "Properties", 56, true]] }} />
        <RibbonGroup g={{ title: "Operations", w: 275, items: [
          ["b", "generate", "Generate\nTool Path", 52],
          ["b", "verify", "Verify\nTool Path", 40],
          ["b", "simulate", "Simulate\nMachine", 46],
          ["b", "post", "Post\nProcess", 30],
          ["b", "shop", "Shop\nDocumentation", 76],
          ["b", "moreOps", "More", 28, true],
        ] }} />

        <Group $w={58}>
          <GroupBody>
            <IconGrid $w={50}>
              <Icon name="dispA" size={12} />
              <Icon name="dispB" size={12} />
              <PressedCell $on><Icon name="monitorA" size={13} /></PressedCell>
              <Icon name="target" size={13} />
              <PressedCell $on><Icon name="monitorB" size={13} /></PressedCell>
              <Icon name="spline" size={13} />
            </IconGrid>
          </GroupBody>
          <Caption>Display</Caption>
        </Group>

        <RibbonGroup g={{ title: "Robotic Machining", w: 105, items: [
          ["g", 5],
          ["b", "jog", "Jog and\nPoses", 38],
          ["b", "edit", "Edit\nRules", 28],
          ["b", "apply", "Apply\nRules", 28],
        ] }} />

        <Group $w={84}>
          <GroupBody>
            <IconGrid $w={40} $left={4}>
              <Icon name="wpA" size={13} /><Icon name="wpB" size={13} />
              <Icon name="wpA" size={13} /><Icon name="wpB" size={13} />
              <Icon name="wpA" size={13} /><Icon name="wpB" size={13} />
            </IconGrid>
            {renderItem(["b", "ipw", "Show 3D\nIPW ▾", 36], 0)}
          </GroupBody>
          <Caption>Workpiece</Caption>
        </Group>

        <RibbonGroup g={{ title: "Analysis", w: 54, items: [["b", "draft", "Draft\nAnalysis", 54, false, true]] }} />
        <RibbonGroup g={{ title: "Geometry", w: 89, items: [
          ["b", "point", "Point", 38, true],
          ["b", "extract", "Extract\nGeometry", 42, false, true],
        ] }} />

        <Group $w={143}>
          <GroupBody>
            {renderItem(["b", "moveFace", "Move\nFace", 38], 0)}
            <SmallColumn $w={73} $gap={3} $top={2} $align="flex-start">
              <SmallAction><Icon name="offset" size={12} />Offset Region</SmallAction>
              <SmallAction><Icon name="replace" size={12} />Replace Face</SmallAction>
              <SmallAction><Icon name="deleteFace" size={12} />Delete Face</SmallAction>
            </SmallColumn>
            {renderItem(["b", "sync", "More", 31, true], 1)}
          </GroupBody>
          <Caption>Synchronous Modeling</Caption>
        </Group>

        <RibbonGroup g={{ title: "Feature", w: 145, items: [
          ["b", "find", "Find\nFeatures", 50],
          ["b", "featureProcess", "Create Feature\nProcess", 58],
          ["b", "moreFeat", "More", 42, true],
        ] }} />

        <Group $w={65}>
          <GroupBody>{renderItem(["b", "layers", "Switch\nLayer/Layout", 65], 0)}</GroupBody>
          <GroupCaption />
        </Group>
        <OverflowArrow />
      </Ribbon>

      <SelectionBar>
        <MenuButton><Icon name="menu" size={22} />Menu<Caret $m="0 0 0 2px" /></MenuButton>
        <ToolButton $w={25} $on><Icon name="navA" size={23} /></ToolButton>
        <Gap $w={2} />
        <ToolButton $w={25}><Icon name="navB" size={22} /></ToolButton>
        <Gap $w={3} />
        <ToolButton $w={25}><Icon name="navC" size={22} /></ToolButton>
        <Gap $w={1} />
        <ToolButton $w={25}><Icon name="navD" size={22} /></ToolButton>
        <VSep $h={22} $m="0 7px 0 5px" />
        <ToolButton $w={25} $on><Icon name="navE" size={23} /></ToolButton>
        <Gap $w={1} />
        <ToolButton $w={25}><Icon name="navF" size={22} /></ToolButton>
        <VSep $h={22} $m="0 8px 0 4px" />
        <SelectBox $w={104}>No Selection Filter<Caret $m="0 2px" /></SelectBox>
        <SelectBox $w={110}>Entire Assembly<Caret $m="0 2px" /></SelectBox>
        <ToolButton><Icon name="filterA" size={22} /></ToolButton>
        <ToolButton><Icon name="filterB" size={22} /></ToolButton>
        <Gap $w={2} />
        <ToolButton><Icon name="selectFace" size={20} /></ToolButton>
        <Gap $w={8}><Caret $m="0" /></Gap>
        <ToolButton><Icon name="rotateTarget" size={22} /></ToolButton>
        <Gap $w={2} />
        <ToolButton><Icon name="binoc" size={22} /></ToolButton>
        <ToolButton><Icon name="marquee" size={20} /></ToolButton>
        <Gap $w={11}><Caret $m="0" /></Gap>
        <ToolButton><Icon name="eraser" size={22} /></ToolButton>
        <ToolButton><Icon name="cubeBlue" size={22} /></ToolButton>
        <VSep $h={22} $m="0 6px 0 5px" />
        <ToolButton><Icon name="zoomFit" size={22} /></ToolButton>
        <ToolButton><Icon name="hand" size={22} /></ToolButton>
        <Gap $w={1} />
        <ToolButton><Icon name="rotate" size={22} /></ToolButton>
        <Gap $w={2} />
        <ToolButton><Icon name="fit" size={21} /></ToolButton>
        <Gap $w={9}><Caret $m="0" /></Gap>
        <ToolButton><Icon name="shade" size={22} /></ToolButton>
        <Gap $w={10}><Caret $m="0" /></Gap>
        <ToolButton><Icon name="cube" size={22} /></ToolButton>
        <Gap $w={8}><Caret $m="0" /></Gap>
        <ToolButton><Icon name="show" size={21} /></ToolButton>
        <Gap $w={10}><Caret $m="0" /></Gap>
        <VSep $h={22} $m="0 0 0 4px" />
        <OverflowArrow />
      </SelectionBar>

      <Main>
        <Rail>
          <RailItem $h={18}><Icon name="gear" size={11} /></RailItem>
          <RailItem $h={11} />
          {railIcons.map(([n, mt, on]) => (
            <RailItem key={n} $mt={mt} $on={on}><Icon name={n} size={19} /></RailItem>
          ))}
        </Rail>
        <Panel>
          <PanelHeader>Operation Navigator - Program Order<PinBox /></PanelHeader>
          <Tree>
            <ColumnHead>Name</ColumnHead>
            <Row $indent={2}>NC_PROGRAM</Row>
            <Row $odd $indent={7}>
              <Dash $w={5} /><Icon name="folder" size={11} /><RowLabel $ml={2}>Unused Items</RowLabel>
            </Row>
            <Row $indent={3}>
              <Expander /><Icon name="bulb" size={12} /><Icon name="folder" size={11} />
              <Selected>ZLEVEL_PROCESS</Selected>
            </Row>
            {rows.map(([label, op, color], i) => (
              <Row key={label} $odd={i % 2 === 0} $indent={20} $color={color}>
                <Dash $w={4} /><Icon name="bulb" size={12} /><Icon name={op} size={12} />
                <RowLabel $ml={0}>{label}</RowLabel>
              </Row>
            ))}
            {emptyRows.map((i) => <Row key={i} $odd={i % 2 === 0} />)}
            <TreeLine />
            <CursorMark viewBox="0 0 12 16">
              <path d="M1 1v12l3-3 2 5 2-1-2-4h4z" fill="#fff" stroke="#111" />
            </CursorMark>
          </Tree>
          <ScrollBar>
            <ArrowLeft /><Thumb>III</Thumb><ArrowRight />
          </ScrollBar>
          <Accordion $h={19} $thick>Dependencies<ChevronDown size={14} strokeWidth={3} color="#3f7f96" /></Accordion>
          <Accordion $h={19}>Details<ChevronDown size={14} strokeWidth={3} color="#3f7f96" /></Accordion>
        </Panel>
        <Viewport>
          <Model />
          <Triad />
        </Viewport>
      </Main>

      <StatusBar>
        <StatusText>total 1</StatusText>
        <Icon name="statusFit" size={12} />
      </StatusBar>
    </Page>
  );
}
